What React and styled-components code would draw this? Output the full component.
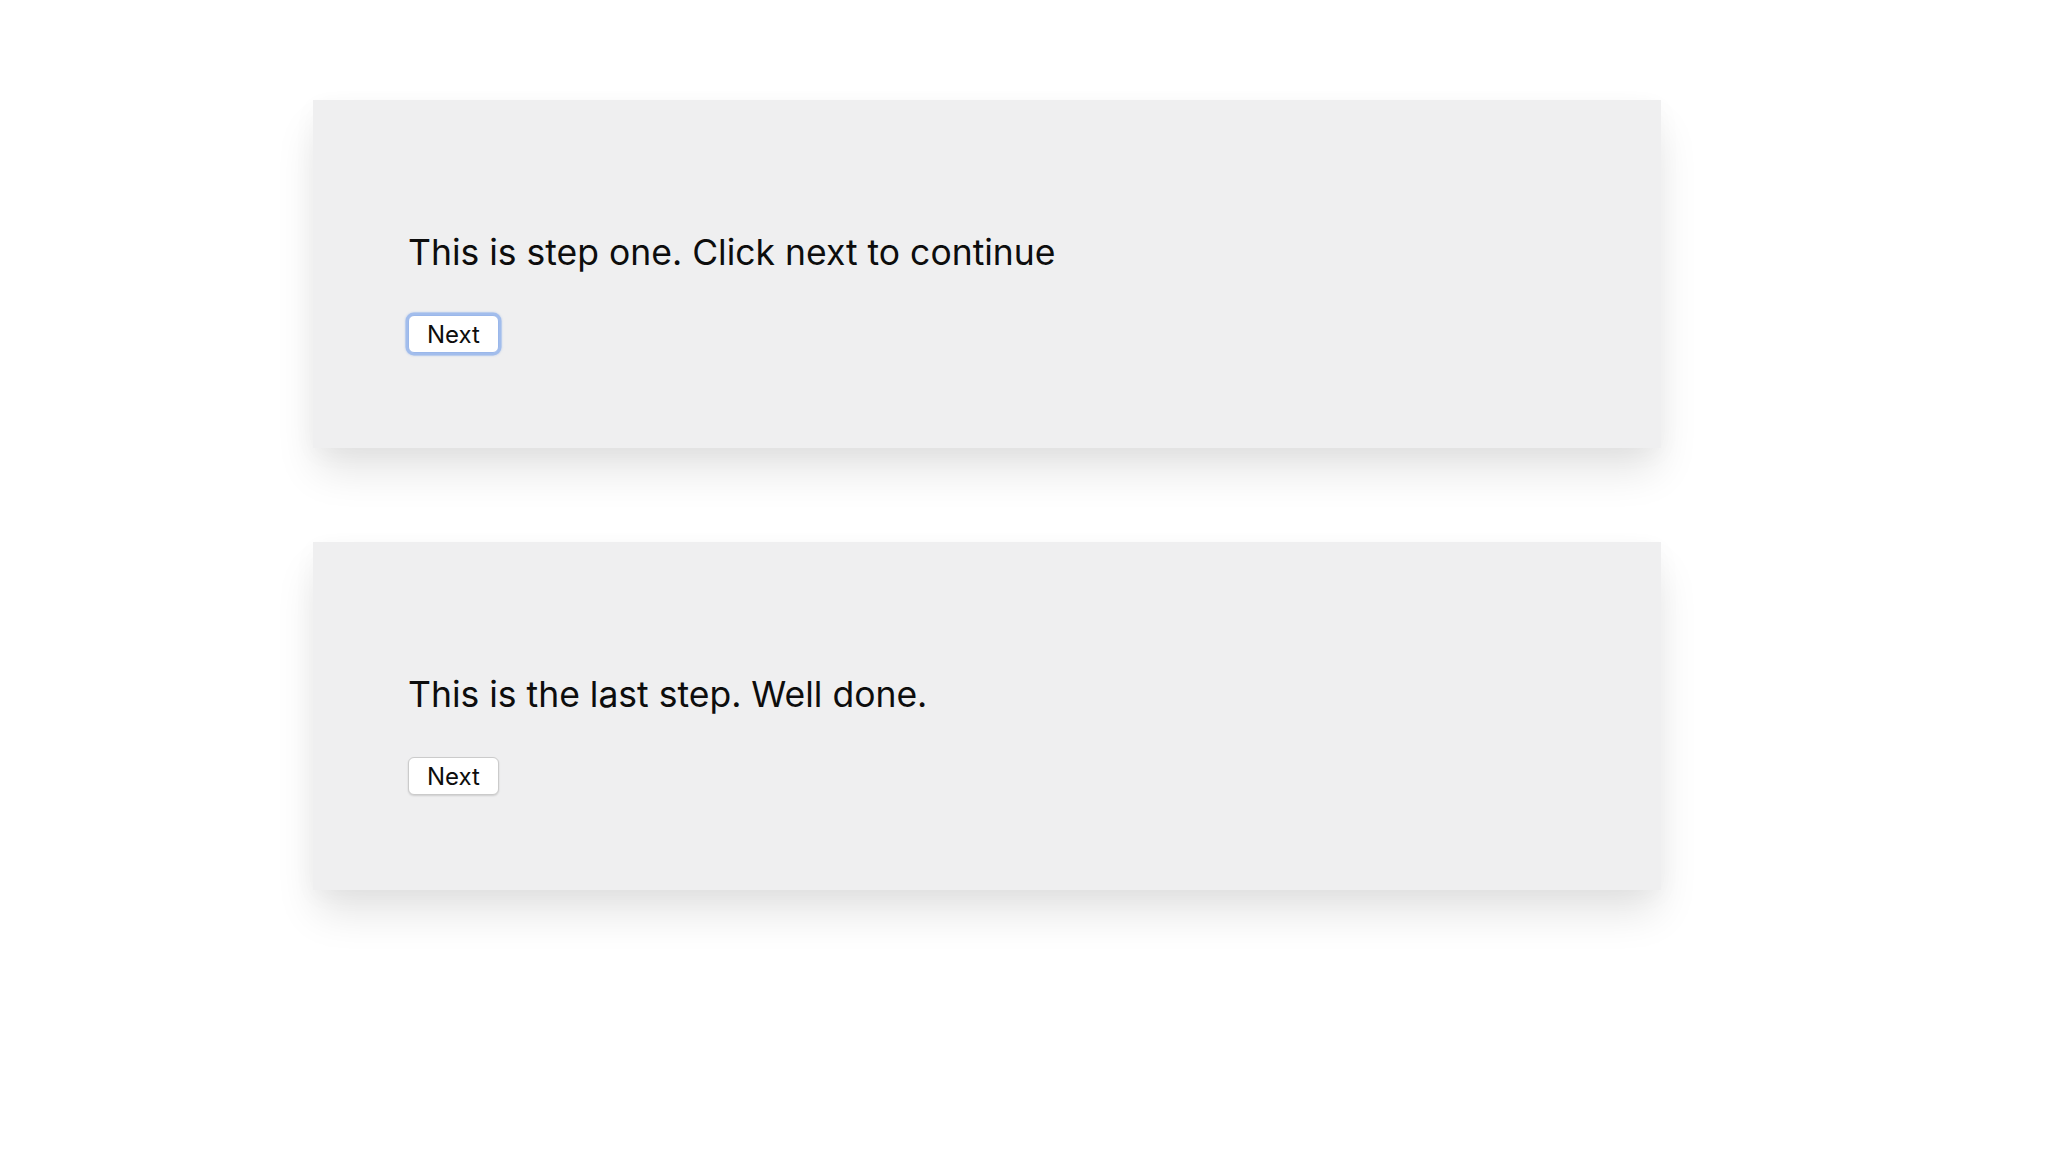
import React from 'react';
import styled, { createGlobalStyle } from 'styled-components';

const GlobalStyle = createGlobalStyle`
  body {
    margin: 0;
    background: #fff;
    font-family: Inter, "Liberation Sans", Arial, sans-serif;
  }
`;

const Page = styled.div`
  display: flex;
  flex-direction: column;
  gap: 94px;
  min-height: 100vh;
  box-sizing: border-box;
  padding: 100px 0 120px 313px;
`;

const Card = styled.div`
  display: flex;
  flex-direction: column;
  align-items: flex-start;
  width: 1348px;
  height: 348px;
  box-sizing: border-box;
  padding: 131px 95px 0;
  background: #efeff0;
  box-shadow: 0 26px 40px -4px rgba(0, 0, 0, 0.11), 0 6px 24px rgba(0, 0, 0, 0.03);
`;

const Message = styled.p`
  margin: 0;
  font-size: 35.5px;
  line-height: 43px;
  color: #0d0d0d;
`;

const NextButton = styled.button`
  margin-top: 41px;
  height: 38px;
  padding: 0 18px;
  font-family: inherit;
  font-size: 24px;
  color: #0d0d0d;
  background: #fff;
  border: 1px solid ${(p) => (p.focused ? '#9ab7ea' : '#cbcbcb')};
  border-radius: 6px;
  box-shadow: ${(p) =>
    p.focused
      ? '0 0 0 2.5px #a2bdec, 0 0 2px 3px rgba(130, 165, 230, 0.35)'
      : '0 1px 2px rgba(0, 0, 0, 0.14)'};
  cursor: pointer;
`;

const steps = [
  { text: 'This is step one. Click next to continue', focused: true },
  { text: 'This is the last step. Well done.', focused: false },
];

const App = () => {
  return (
    <>
      <GlobalStyle />
      <Page>
        {steps.map((step) => (
          <Card key={step.text}>
            <Message>{step.text}</Message>
            <NextButton focused={step.focused}>Next</NextButton>
          </Card>
        ))}
      </Page>
    </>
  );
};

export default App;
